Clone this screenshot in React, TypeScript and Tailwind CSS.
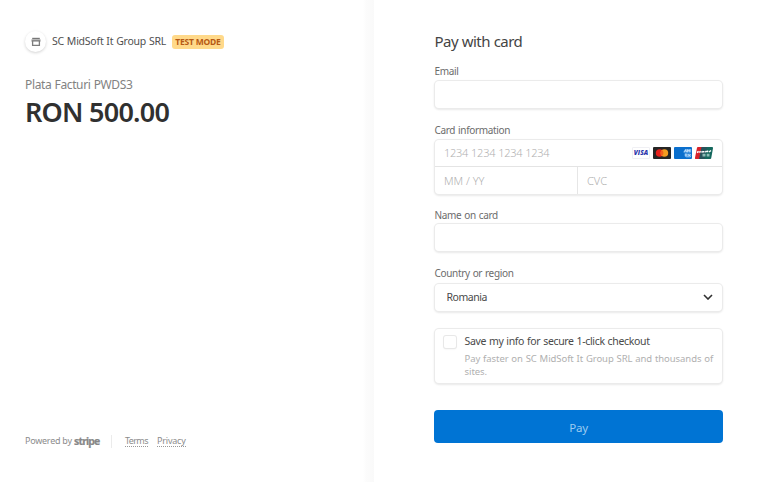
import type { ReactNode } from "react";

const field =
  "rounded-[4px] bg-white shadow-[0_0_0_1px_#ebebeb,0_1px_2px_1px_rgba(0,0,0,0.09)]";

function Label({ children }: { children: ReactNode }) {
  return (
    <div className="-ml-[0.5px] h-[16px] whitespace-nowrap text-[10px] leading-[16px] tracking-[-0.33px] text-[#6c6c6c] [word-spacing:0.6px]">{children}</div>
  );
}

function StoreIcon() {
  return (
    <svg width="10" height="10" viewBox="0 0 10 10" fill="none">
      <path d="M1.2.8h7.6V2H1.2z" fill="#777" />
      <path d="M.5 2.4h9v2.2h-9z" fill="#8a8a8a" />
      <path d="M1.6 4v4.4h6.8V4" stroke="#7d7d7d" strokeWidth="1.3" />
    </svg>
  );
}

function CardBrands() {
  return (
    <div className="flex gap-[3px]">
      <div className="flex h-[12px] w-[18px] items-center justify-center rounded-[1px] border border-[#f0f0f4] bg-white font-['Open_Sans',sans-serif] text-[6.5px] font-extrabold italic leading-none text-[#2b36ab]">
        VISA
      </div>
      <svg width="18" height="12" viewBox="0 0 18 12">
        <rect width="18" height="12" rx="1" fill="#252525" />
        <circle cx="6.6" cy="6" r="3.8" fill="#e8201b" />
        <circle cx="11.4" cy="6" r="3.8" fill="#f59d20" />
        <path d="M9 3a3.8 3.8 0 0 1 0 6 3.8 3.8 0 0 1 0-6z" fill="#f4601e" />
      </svg>
      <svg width="18" height="12" viewBox="0 0 18 12">
        <rect width="18" height="12" rx="1" fill="#0b6fcd" />
        <path d="M9.5 4.2l1.8-2.2h5.9v3.6H9.5zM10.5 6.5h6l.9 1.8-.9 2.2h-4.2l-1.8-1.4z" fill="#5fa6e6" />
        <path d="M10.4 5.3l1.2-2.6 1.1 2.6M13.6 5.3V2.7l1.1 1.4 1.1-1.4v2.6M11 7.2h1.8M11 8.8h1.8M14 7.2l2.4 2.4M16.4 7.2L14 9.6" stroke="#d5eaff" strokeWidth=".8" fill="none" />
      </svg>
      <svg width="18" height="12" viewBox="0 0 18 12">
        <path d="M3 0h4.5L5 12H1a1 1 0 0 1-1-1.2L2 .8A1 1 0 0 1 3 0z" fill="#d9222a" />
        <path d="M6.5 0H13l-2 12H4z" fill="#27535b" />
        <path d="M12 0h5a1 1 0 0 1 1 1.2l-1.8 10a1 1 0 0 1-1 .8H9.5z" fill="#14675d" />
        <path d="M2 5.6l1.6-1.2M4.3 5.3l1.4-1M6.5 5.3l1.3-1M8.7 5.6V4M10.3 5.2l1.2-1.2M12.5 5.2V3.6M14 5l2-1.5" stroke="#fff" strokeWidth="1.5" />
        <path d="M7.5 6.8h3v2.7h-3zM11.7 6.8h2.8v2.7h-2.8z" fill="#8dbcb5" />
      </svg>
    </div>
  );
}

export default function App() {
  return (
    <div className="flex h-[482px] w-[768px] overflow-hidden bg-white font-['Noto_Sans','Open_Sans',sans-serif] text-[#333]">
      <aside className="flex w-[374px] flex-col bg-[linear-gradient(to_right,#fff_363px,#fcfcfc_366px,#f9f9f9_374px)] pl-[25px] pt-[31px]">
        <div className="flex h-[21px] items-center">
          <div className="flex size-[21px] items-center justify-center rounded-full bg-white shadow-[0_1px_3px_rgba(0,0,0,0.18)]">
            <StoreIcon />
          </div>
          <div className="ml-[6px] mt-[1px] w-[120px] whitespace-nowrap text-[10.5px] tracking-[-0.23px] text-[#505050] [word-spacing:0.4px]">SC MidSoft It Group SRL</div>
          <div className="flex h-[14px] w-[52px] items-center justify-center whitespace-nowrap rounded-[3px] bg-[#ffd98a] pt-px text-[8.5px] font-bold tracking-[-0.2px] text-[#b75a14]">
            TEST MODE
          </div>
        </div>
        <div className="mt-[24px] h-[18px] whitespace-nowrap text-[12px] leading-[18px] tracking-[-0.36px] text-[#828282] [word-spacing:0.4px]">Plata Facturi PWDS3</div>
        <div className="h-[36px] whitespace-nowrap text-[27px] font-semibold leading-[36px] tracking-[-0.75px] text-[#303030]">RON 500.00</div>
        <footer className="mt-[304px] flex h-[14px] items-center whitespace-nowrap text-[9px] text-[#8c8c8c]">
          <span className="w-[49px] tracking-[-0.25px]">Powered by</span>
          <span className="w-[37px] text-[10.5px] font-bold leading-[12px] tracking-[-0.85px] text-[#888] [-webkit-text-stroke:0.2px_#888]">stripe</span>
          <span className="mr-[13px] h-[13px] w-px bg-[#ebebeb]" />
          <span className="mr-[9px] w-[23px] border-b border-dotted border-[#999] leading-[11px] tracking-[-0.6px]">Terms</span>
          <span className="border-b border-dotted border-[#999] leading-[11px] tracking-[-0.2px]">Privacy</span>
        </footer>
      </aside>
      <main className="w-[394px] pl-[61px] pt-[30px]">
        <div className="w-[287px]">
          <h1 className="-ml-[0.5px] h-[22px] whitespace-nowrap text-[15px] leading-[22px] tracking-[-0.55px] text-[#444] [word-spacing:0.4px]">Pay with card</h1>
          <div className="mt-[11px]">
            <Label>Email</Label>
            <div className={`mt-[2px] h-[27px] ${field}`} />
          </div>
          <div className="mt-[14px]">
            <Label>Card information</Label>
            <div className={`mt-[2px] h-[54px] ${field}`}>
              <div className="flex h-[27px] items-center justify-between border-b border-[#e4e4e4] pl-[9px] pr-[9px] text-[11px] font-light text-[#b0b0b0]">
                <span className="mt-[1px] tracking-[-0.24px] [word-spacing:0.3px]">1234 1234 1234 1234</span>
                <CardBrands />
              </div>
              <div className="flex h-[27px] text-[11px] font-light leading-[27px] text-[#b0b0b0]">
                <div className="w-[143px] border-r border-[#e6e6e6] pl-[9px]">MM / YY</div>
                <div className="pl-[9px]">CVC</div>
              </div>
            </div>
          </div>
          <div className="mt-[13px]">
            <Label>Name on card</Label>
            <div className={`mt-[1px] h-[27px] ${field}`} />
          </div>
          <div className="mt-[14px]">
            <Label>Country or region</Label>
            <div className={`mt-[3px] flex h-[27px] items-center justify-between pl-[11.5px] pr-[9px] text-[10.5px] text-[#4a4a4a] ${field}`}>
              <span className="tracking-[-0.45px]">Romania</span>
              <svg className="-mt-px" width="10" height="6" viewBox="0 0 10 6" fill="none">
                <path d="M1 1l4 4 4-4" stroke="#303030" strokeWidth="1.6" />
              </svg>
            </div>
          </div>
          <div className={`mt-[18px] flex h-[54px] pl-[9px] pt-[7px] ${field}`}>
            <div className="mr-[9px] size-[12px] shrink-0 rounded-[2px] bg-white shadow-[0_0_0_1px_#e8e8e8,0_1px_2px_rgba(0,0,0,0.1)]" />
            <div className="-ml-[0.5px] whitespace-nowrap">
              <div className="-mt-[2px] h-[17px] text-[10.5px] leading-[15px] tracking-[-0.34px] text-[#4a4a4a] [word-spacing:0.5px]">Save my info for secure 1-click checkout</div>
              <div className="pt-[0.5px] text-[9.5px] leading-[13px] tracking-[-0.06px] text-[#b0b0b0] [word-spacing:0.4px]">
                Pay faster on SC MidSoft It Group SRL and thousands of
                <br />
                sites.
              </div>
            </div>
          </div>
          <button className="-ml-[1px] mt-[27px] block h-[33px] w-[289px] rounded-[4px] bg-[#0074d4] pt-[2px] text-[11.5px] leading-[31px] tracking-[-0.2px] text-[#9ccbf0]">Pay</button>
        </div>
      </main>
    </div>
  );
}
